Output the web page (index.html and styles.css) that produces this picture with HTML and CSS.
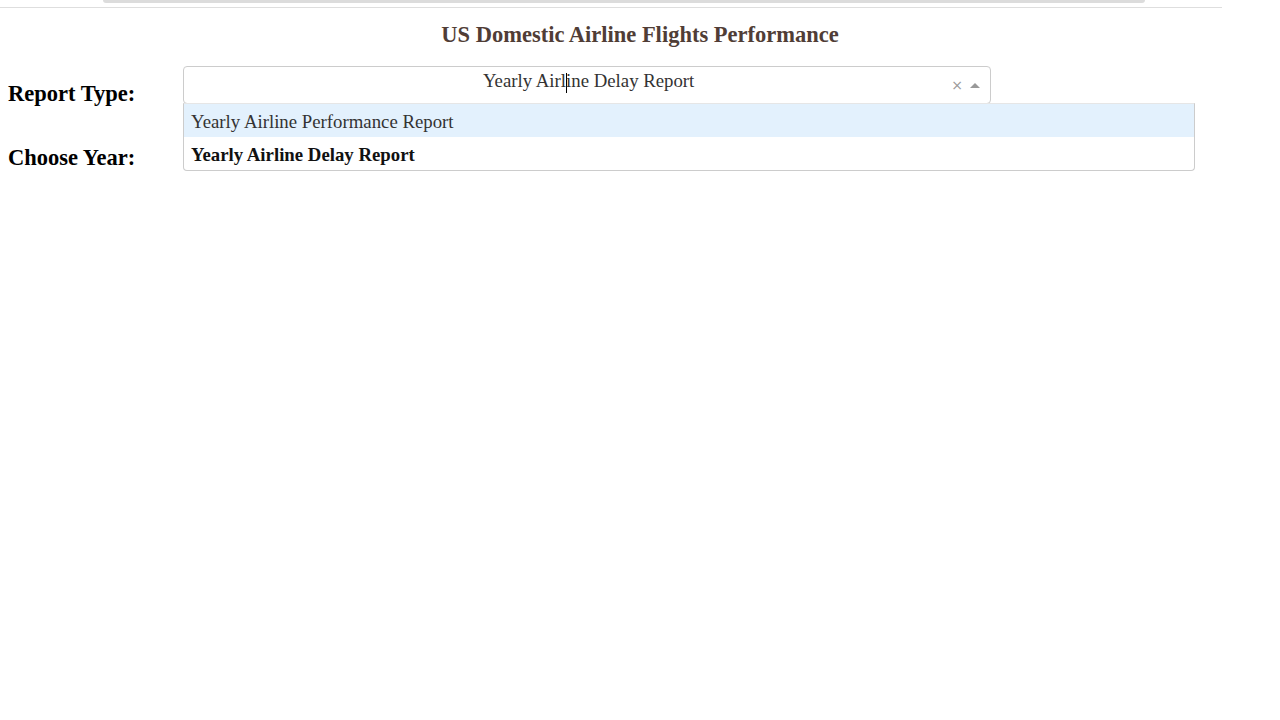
FILE: index.html
```html
<!DOCTYPE html>
<html>
<head>
<meta charset="utf-8">
<link rel="stylesheet" href="styles.css">
</head>
<body>
<div class="chrome">
  <div class="chrome-bar"></div>
  <div class="chrome-line"></div>
</div>
<h1 class="title">US Domestic Airline Flights Performance</h1>
<div class="form">
  <div class="row row-report">
    <div class="label">Report Type:</div>
    <div class="select">
      <div class="control">
        <div class="value">Yearly Airl<span class="caret"></span>ine Delay Report</div>
        <div class="indicators">
          <span class="clear">×</span>
          <span class="arrow"></span>
        </div>
      </div>
      <div class="menu">
        <div class="option focused">Yearly Airline Performance Report</div>
        <div class="option selected">Yearly Airline Delay Report</div>
      </div>
    </div>
  </div>
  <div class="row row-year">
    <div class="label">Choose Year:</div>
  </div>
</div>
</body>
</html>
```
FILE: styles.css
```css
html, body {
  margin: 0;
  padding: 0;
  background: #fff;
  font-family: "Liberation Serif", "Times New Roman", serif;
}
body {
  min-height: 720px;
}
.chrome {
  height: 8px;
}
.chrome-bar {
  margin-left: 103px;
  width: 1042px;
  height: 3px;
  background: #dcdcdc;
  border-radius: 0 0 6px 6px;
}
.chrome-line {
  margin-top: 4px;
  width: 1222px;
  height: 1px;
  background: #dedede;
}
.title {
  margin: 14px 0 0;
  text-align: center;
  font-size: 22.5px;
  font-weight: bold;
  color: #503d36;
  line-height: 26px;
}
.form {
  margin-top: 18px;
}
.row {
  display: flex;
  align-items: flex-start;
}
.label {
  width: 183px;
  padding-left: 8px;
  box-sizing: border-box;
  font-size: 22.5px;
  font-weight: bold;
  color: #000;
  line-height: 26px;
  flex-shrink: 0;
}
.row-report .label {
  padding-top: 15px;
}
.row-year {
  margin-top: 38px;
}
.select {
  position: relative;
  width: 808px;
}
.control {
  height: 38px;
  box-sizing: border-box;
  border: 1px solid #ccc;
  border-radius: 4px;
  display: flex;
  align-items: flex-start;
}
.value {
  flex: 1;
  text-align: center;
  font-size: 18.8px;
  color: #333;
  line-height: 26px;
  padding-top: 1px;
  padding-left: 42px;
}
.caret {
  display: inline-block;
  width: 0;
  height: 20px;
  border-left: 1px solid #000;
  margin-right: -1px;
  vertical-align: -6px;
}
.indicators {
  display: flex;
  align-items: center;
  gap: 7px;
  padding: 10px 10px 0 0;
}
.clear {
  font-family: "DejaVu Sans", sans-serif;
  font-size: 14px;
  color: #999;
  line-height: 16px;
}
.arrow {
  width: 0;
  height: 0;
  border-left: 5px solid transparent;
  border-right: 5px solid transparent;
  border-bottom: 5px solid #999;
  margin-top: 1px;
}
.menu {
  position: absolute;
  top: 37px;
  left: 0;
  width: 1012px;
  box-sizing: border-box;
  border: 1px solid #ccc;
  border-top-color: #e6e6e6;
  border-radius: 0 0 4px 4px;
  background: #fff;
  z-index: 10;
}
.option {
  height: 33px;
  box-sizing: border-box;
  padding: 2px 0 0 7px;
  font-size: 18.8px;
  line-height: 31px;
  color: #333;
}
.option.focused {
  background: #e3f1fd;
}
.option.selected {
  font-weight: bold;
  color: #111;
}
```
